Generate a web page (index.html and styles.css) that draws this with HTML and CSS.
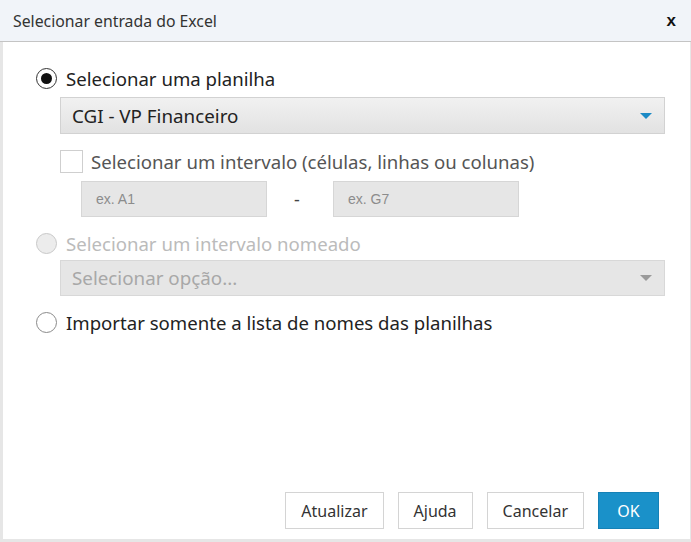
FILE: index.html
```html
<!DOCTYPE html>
<html lang="pt">
<head>
<meta charset="utf-8">
<title>Selecionar entrada do Excel</title>
<link rel="stylesheet" href="styles.css">
</head>
<body>
<div class="dialog">
  <div class="titlebar">
    <span class="title">Selecionar entrada do Excel</span>
    <span class="close">x</span>
  </div>
  <div class="content">
    <label class="option">
      <span class="radio checked"></span>
      <span class="label">Selecionar uma planilha</span>
    </label>
    <div class="select select-active">
      <span class="select-text">CGI - VP Financeiro</span>
      <span class="caret caret-blue"></span>
    </div>
    <label class="option check-row">
      <span class="checkbox"></span>
      <span class="label muted">Selecionar um intervalo (células, linhas ou colunas)</span>
    </label>
    <div class="range">
      <div class="input">ex. A1</div>
      <span class="dash">-</span>
      <div class="input">ex. G7</div>
    </div>
    <label class="option option-gap disabled">
      <span class="radio radio-disabled"></span>
      <span class="label">Selecionar um intervalo nomeado</span>
    </label>
    <div class="select select-disabled">
      <span class="select-text">Selecionar opção...</span>
      <span class="caret caret-gray"></span>
    </div>
    <label class="option option-gap">
      <span class="radio"></span>
      <span class="label">Importar somente a lista de nomes das planilhas</span>
    </label>
    <div class="footer">
      <button class="btn">Atualizar</button>
      <button class="btn">Ajuda</button>
      <button class="btn">Cancelar</button>
      <button class="btn btn-primary">OK</button>
    </div>
  </div>
</div>
</body>
</html>
```
FILE: styles.css
```css
* { box-sizing: border-box; }
html, body { margin: 0; padding: 0; background: #fff; }
body { font-family: "Noto Sans", "Open Sans", sans-serif; color: #222; }

.dialog {
  width: 691px;
  height: 542px;
  display: flex;
  flex-direction: column;
}

.titlebar {
  height: 42px;
  background: #f1f4f9;
  border-bottom: 1px solid #c4c4c4;
  display: flex;
  align-items: center;
  justify-content: space-between;
  padding: 0 15px 0 13px;
  flex-shrink: 0;
}
.title { font-size: 15.8px; color: #333; }
.close { font-size: 17px; font-weight: bold; color: #111; font-family: "Liberation Sans", sans-serif; }

.content {
  flex: 1;
  display: flex;
  flex-direction: column;
  border-left: 3px solid #e6e6e6;
  border-right: 1px solid #e6e6e6;
  border-bottom: 3px solid #e6e6e6;
  padding: 25px 25px 10px 33px;
}

.option {
  display: flex;
  align-items: center;
  height: 22px;
  font-size: 18.6px;
  color: #222;
}
.option-gap { margin-top: 15px; }
.label { margin-left: 9px; white-space: nowrap; }
.muted { color: #555; }
.disabled .label { color: #bbb; }

.radio {
  width: 21px;
  height: 21px;
  border-radius: 50%;
  border: 1px solid #8a8a8a;
  background: #fff;
  display: flex;
  align-items: center;
  justify-content: center;
  flex-shrink: 0;
}
.radio.checked { border: 1.5px solid #333; }
.radio.checked::after {
  content: "";
  width: 11px;
  height: 11px;
  border-radius: 50%;
  background: #111;
}
.radio-disabled { border-color: #c8c8c8; background: #ececec; }

.select {
  margin-top: 8px;
  margin-left: 24px;
  height: 37px;
  display: flex;
  align-items: center;
  justify-content: space-between;
  padding: 0 12px 0 11px;
  border: 1px solid #d2d2d2;
  font-size: 18.8px;
}
.select-active { background: linear-gradient(#f1f1f1, #e2e2e2); color: #222; }
.select-disabled { margin-top: 6px; height: 36px; background: #e6e6e6; color: #a8a8a8; border-color: #d8d8d8; }
.caret {
  width: 0;
  height: 0;
  border-left: 6px solid transparent;
  border-right: 6px solid transparent;
  border-top: 6px solid #1b8ac5;
}
.caret-gray { border-top-color: #9a9a9a; }

.check-row { margin-top: 16px; margin-left: 24px; height: 23px; }
.checkbox {
  width: 23px;
  height: 23px;
  border: 1px solid #cfcfcf;
  background: #fff;
  flex-shrink: 0;
}
.check-row .label { margin-left: 8px; }

.range {
  margin-top: 8px;
  margin-left: 45px;
  display: flex;
  align-items: center;
}
.input {
  width: 186px;
  height: 36px;
  background: #e6e6e6;
  border: 1px solid #d6d6d6;
  font-family: "Liberation Sans", Arial, sans-serif;
  font-size: 14px;
  color: #8c8c8c;
  display: flex;
  align-items: center;
  padding-left: 14px;
}
.dash { width: 66px; text-align: center; color: #444; font-size: 18px; padding-right: 6px; }

.footer {
  margin-top: auto;
  display: flex;
  justify-content: flex-end;
  gap: 14px;
  padding-right: 6px;
}
.btn {
  height: 37px;
  padding: 0 15px;
  font-family: inherit;
  font-size: 16px;
  color: #333;
  background: #fff;
  border: 1px solid #d4d4d4;
  cursor: pointer;
}
.btn-primary {
  background: #1a91c9;
  border-color: #1581b6;
  color: #fff;
  width: 61px;
}
```
